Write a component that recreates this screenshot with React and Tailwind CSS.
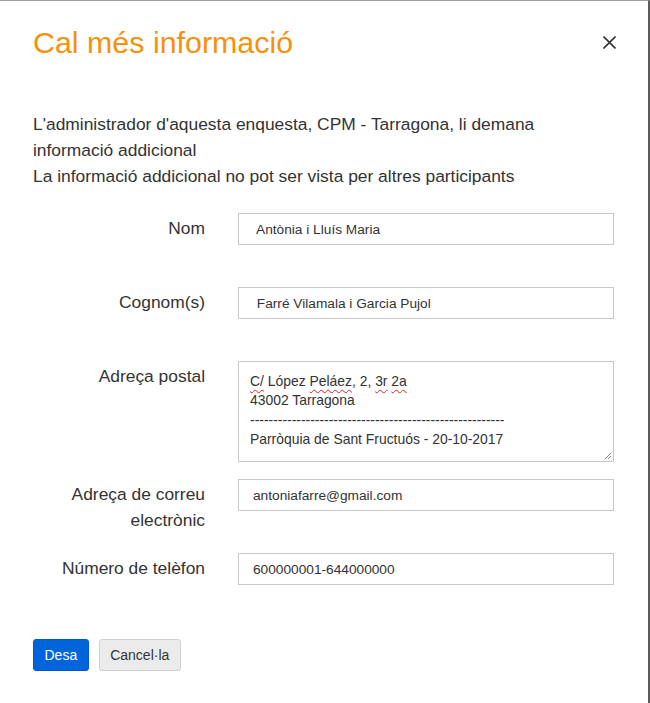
import React from "react";

function Row({ label, children, className = "" }) {
  return (
    <div className={"flex " + className}>
      <div className="w-[172px] shrink-0 text-right pt-[2px] text-[17.4px] leading-[26px] text-[#333]">
        {label}
      </div>
      <div className="ml-[33px] w-[376px]">{children}</div>
    </div>
  );
}

function TextInput({ value, pl = "pl-[14px]" }) {
  return (
    <input
      readOnly
      value={value}
      className={
        "block w-full h-[32px] border border-[#c8c8c8] bg-white text-[13.7px] text-[#333] outline-none font-['Liberation_Sans',Arial,sans-serif] " +
        pl
      }
    />
  );
}

const Sq = ({ children }) => (
  <span className="underline decoration-wavy decoration-[#e02020] decoration-1 underline-offset-[3px]">
    {children}
  </span>
);

export default function App() {
  return (
    <div className="w-[650px] h-[703px] bg-white border-t border-t-[#a0a0a0] border-r-2 border-r-[#5a5a5a] font-['Liberation_Sans',Arial,sans-serif] text-[#333] overflow-hidden">
      <div className="flex justify-between items-start pl-[33px] pr-[32px] pt-[24px]">
        <h1 className="text-[30.4px] leading-[34px] text-[#f7900a] font-normal">
          Cal més informació
        </h1>
        <button className="mt-[11px] w-[13px] h-[13px] flex items-center justify-center">
          <svg width="13" height="13" viewBox="0 0 13 13">
            <path d="M0.5 0.5 L12.5 12.5 M12.5 0.5 L0.5 12.5" stroke="#333" strokeWidth="1.6" fill="none" />
          </svg>
        </button>
      </div>

      <div className="pl-[33px] mt-[52px] text-[17.4px] leading-[26px] text-[#333]">
        <p>L'administrador d'aquesta enquesta, CPM - Tarragona, li demana</p>
        <p>informació addicional</p>
        <p>La informació addicional no pot ser vista per altres participants</p>
      </div>

      <div className="pl-[33px] mt-[24px] flex flex-col">
        <Row label="Nom">
          <TextInput value=" Antònia i Lluís Maria" />
        </Row>
        <Row label="Cognom(s)" className="mt-[42px]">
          <TextInput value=" Farré Vilamala i Garcia Pujol" />
        </Row>
        <Row label="Adreça postal" className="mt-[42px]">
          <div className="relative h-[101px] border border-[#c8c8c8] bg-white pl-[11px] pt-[10px] text-[13.9px] leading-[19px] text-[#333]">
            <div>
              <Sq>C/</Sq> López <Sq>Peláez</Sq>, 2, <Sq>3r</Sq> <Sq>2a</Sq>
            </div>
            <div>43002 Tarragona</div>
            <div className="mt-[1px]">-------------------------------------------------------</div>
            <div>Parròquia de Sant Fructuós - 20-10-2017</div>
            <svg className="absolute right-[1px] bottom-[1px]" width="9" height="9" viewBox="0 0 9 9">
              <path d="M8 2 L2 8 M8 5 L5 8" stroke="#888" strokeWidth="1" fill="none" />
            </svg>
          </div>
        </Row>
        <Row label={<>Adreça de correu<br />electrònic</>} className="mt-[17px]">
          <TextInput value="antoniafarre@gmail.com" />
        </Row>
        <Row label="Número de telèfon" className="mt-[20px]">
          <TextInput value="600000001-644000000" />
        </Row>
      </div>

      <div className="pl-[33px] mt-[54px] flex gap-[10px]">
        <button className="h-[32px] px-[10.5px] rounded-[3px] bg-[#0064db] text-white text-[14px] border border-[#0058c8]">
          Desa
        </button>
        <button className="h-[32px] px-[10.5px] rounded-[3px] bg-[#ebebeb] text-[#333] text-[14px] border border-[#cfcfcf]">
          Cancel·la
        </button>
      </div>
    </div>
  );
}
